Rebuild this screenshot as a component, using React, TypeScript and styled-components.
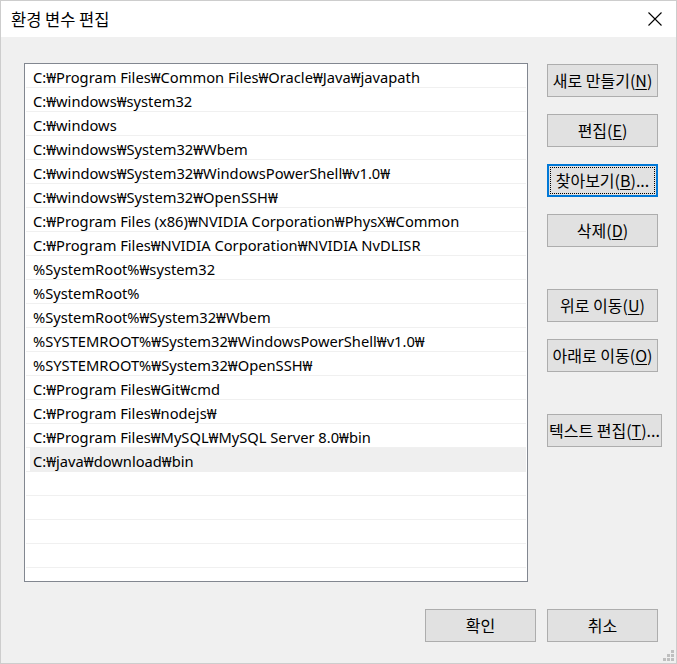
import React from "react";
import styled, { createGlobalStyle } from "styled-components";

const GlobalStyle = createGlobalStyle`
  html, body { margin: 0; padding: 0; background: #f0f0f0; }
  body { font-family: "Noto Sans", "Noto Sans CJK KR", sans-serif; }
  * { box-sizing: border-box; }
`;

const Window = styled.div`
  width: 677px;
  height: 664px;
  border: 1px solid #cdcdcd;
  background: #f0f0f0;
  display: flex;
  flex-direction: column;
  position: relative;
  overflow: hidden;
`;

const TitleBar = styled.div`
  height: 36px;
  background: #ffffff;
  display: flex;
  align-items: center;
  justify-content: space-between;
  padding: 0 14px 0 10px;
`;

const Title = styled.span`
  font-family: "Noto Sans CJK KR", sans-serif;
  font-size: 16.5px;
  color: #000;
  line-height: 1;
  margin-top: 0px;
`;

const CloseIcon = styled.svg`
  width: 14px;
  height: 14px;
  display: block;
`;

const Main = styled.div`
  display: flex;
  padding: 26px 0 0 23px;
`;

const List = styled.div`
  width: 504px;
  height: 519px;
  border: 1px solid #828790;
  background: #fff;
  padding: 0 1px;
  overflow: hidden;
`;

const Row = styled.div<{ $selected?: boolean }>`
  height: 24px;
  border-bottom: 1px solid #f0f0f0;
  padding: 2px 0 0 7px;
  display: flex;
  align-items: center;
  font-family: "Noto Sans", "Noto Sans CJK KR", sans-serif;
  font-size: 14.7px;
  color: #000;
  white-space: nowrap;
  background: ${(p) =>
    p.$selected ? "linear-gradient(to right, #fff 4px, #efefef 4px)" : "#fff"};
  ${(p) => (p.$selected ? "border-bottom-color: #efefef;" : "")}
`;

const FirstRowSpacer = styled.div`
  height: 1px;
`;

const ButtonColumn = styled.div`
  display: flex;
  flex-direction: column;
  align-items: flex-start;
  margin-left: 19px;
  padding-top: 1px;
`;

const Button = styled.button<{ $focused?: boolean; $wide?: boolean; $gap?: number }>`
  width: ${(p) => (p.$wide ? "115px" : "111px")};
  height: 33px;
  margin-top: ${(p) => p.$gap ?? 0}px;
  background: #e1e1e1;
  border: ${(p) => (p.$focused ? "2px solid #0078d7" : "1px solid #adadad")};
  border-radius: 0;
  padding: 0 0 1px;
  font-family: "Noto Sans CJK KR", sans-serif;
  font-size: 16px;
  color: #000;
  display: flex;
  align-items: center;
  justify-content: center;
  white-space: nowrap;
  ${(p) => (p.$focused ? "outline: 1px dotted #000; outline-offset: -4px;" : "")}
  u { text-decoration: underline; text-underline-offset: 2px; }
`;

const Footer = styled.div`
  display: flex;
  justify-content: flex-end;
  gap: 11px;
  padding: 27px 18px 0 0;
`;

const Grip = styled.div`
  position: absolute;
  right: 2px;
  bottom: 2px;
  display: grid;
  grid-template-columns: repeat(3, 3px);
  grid-template-rows: repeat(3, 3px);
  gap: 1px;
`;

const GripDot = styled.span<{ $show: boolean }>`
  background: ${(p) => (p.$show ? "#bfbfbf" : "transparent")};
`;

const paths = [
  "C:₩Program Files₩Common Files₩Oracle₩Java₩javapath",
  "C:₩windows₩system32",
  "C:₩windows",
  "C:₩windows₩System32₩Wbem",
  "C:₩windows₩System32₩WindowsPowerShell₩v1.0₩",
  "C:₩windows₩System32₩OpenSSH₩",
  "C:₩Program Files (x86)₩NVIDIA Corporation₩PhysX₩Common",
  "C:₩Program Files₩NVIDIA Corporation₩NVIDIA NvDLISR",
  "%SystemRoot%₩system32",
  "%SystemRoot%",
  "%SystemRoot%₩System32₩Wbem",
  "%SYSTEMROOT%₩System32₩WindowsPowerShell₩v1.0₩",
  "%SYSTEMROOT%₩System32₩OpenSSH₩",
  "C:₩Program Files₩Git₩cmd",
  "C:₩Program Files₩nodejs₩",
  "C:₩Program Files₩MySQL₩MySQL Server 8.0₩bin",
  "C:₩java₩download₩bin",
];

const gripPattern = [false, false, true, false, true, true, true, true, true];

export default function App() {
  return (
    <>
      <GlobalStyle />
      <Window>
        <TitleBar>
          <Title>환경 변수 편집</Title>
          <CloseIcon viewBox="0 0 14 14">
            <path d="M0.5 0.5 L13.5 13.5 M13.5 0.5 L0.5 13.5" stroke="#000" strokeWidth="1.1" fill="none" />
          </CloseIcon>
        </TitleBar>
        <Main>
          <List>
            {paths.map((p, i) => (
              <Row key={i} $selected={i === paths.length - 1}>
                {p}
              </Row>
            ))}
            {Array.from({ length: 5 }).map((_, i) => (
              <Row key={`e${i}`} />
            ))}
            <FirstRowSpacer />
          </List>
          <ButtonColumn>
            <Button>새로 만들기(<u>N</u>)</Button>
            <Button $gap={17}>편집(<u>E</u>)</Button>
            <Button $gap={17} $focused>찾아보기(<u>B</u>)...</Button>
            <Button $gap={17}>삭제(<u>D</u>)</Button>
            <Button $gap={42}>위로 이동(<u>U</u>)</Button>
            <Button $gap={17}>아래로 이동(<u>O</u>)</Button>
            <Button $gap={42} $wide>텍스트 편집(<u>T</u>)...</Button>
          </ButtonColumn>
        </Main>
        <Footer>
          <Button>확인</Button>
          <Button>취소</Button>
        </Footer>
        <Grip>
          {gripPattern.map((s, i) => (
            <GripDot key={i} $show={s} />
          ))}
        </Grip>
      </Window>
    </>
  );
}
